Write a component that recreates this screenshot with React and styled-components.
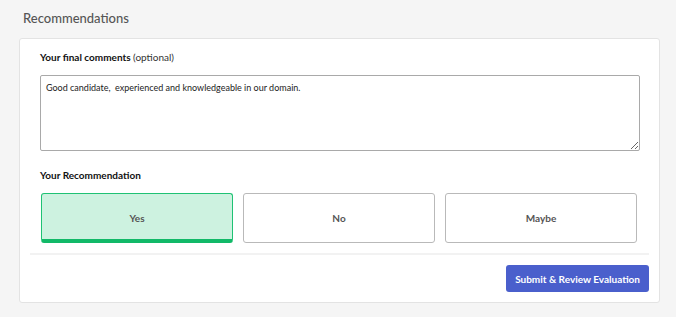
import styled, { createGlobalStyle } from "styled-components";

const GlobalStyle = createGlobalStyle`
  body {
    margin: 0;
    background: #f5f5f5;
    font-family: Lato, "Open Sans", sans-serif;
  }
`;

const Page = styled.div`
  padding: 8px 16px 14px 19px;
  width: 641px;
`;

const Heading = styled.h2`
  margin: 0 0 10px 4px;
  font-size: 13px;
  font-weight: 500;
  line-height: 20px;
  color: #555;
`;

const Card = styled.div`
  background: #fff;
  border: 1px solid #e3e3e3;
  border-radius: 3px;
  padding: 10px;
`;

const Section = styled.div`
  padding: 1px 10px 10px;
  border-bottom: 2px solid #f2f2f2;
`;

const Label = styled.div`
  font-size: 10px;
  line-height: 14px;
  font-weight: 700;
  color: #111;
  margin: 0 0 11px;
  & span {
    font-weight: 400;
    color: #333;
  }
`;

const Comments = styled.textarea`
  display: block;
  box-sizing: border-box;
  width: 600px;
  height: 76px;
  margin: 0 0 17px;
  padding: 5px;
  border: 1px solid #a9a9a9;
  border-radius: 2px;
  font-family: Lato, "Open Sans", sans-serif;
  font-size: 9px;
  line-height: 13px;
  color: #222;
  resize: vertical;
`;

const Choices = styled.div`
  display: grid;
  grid-template-columns: repeat(3, 1fr);
  gap: 10px;
  padding: 0 2px 0 1px;
`;

const Choice = styled.button`
  box-sizing: border-box;
  height: 50px;
  border-radius: 3px;
  border: 1px solid ${(p) => (p.$active ? "#1fc274" : "#b9b9b9")};
  border-bottom: ${(p) => (p.$active ? "4px solid #12b968" : "1px solid #b9b9b9")};
  background: ${(p) => (p.$active ? "#cdf2e0" : "#fff")};
  font-family: Lato, "Open Sans", sans-serif;
  font-size: 10px;
  font-weight: 700;
  color: #555;
  padding: ${(p) => (p.$active ? "3px 0 0" : "0")};
  cursor: pointer;
`;

const Footer = styled.div`
  display: flex;
  justify-content: flex-end;
  padding-top: 10px;
`;

const Submit = styled.button`
  height: 27px;
  padding: 0 9px;
  border: none;
  border-radius: 3px;
  background: #4a5fcc;
  color: #fff;
  font-family: Lato, "Open Sans", sans-serif;
  font-size: 10px;
  font-weight: 700;
  cursor: pointer;
`;

const options = ["Yes", "No", "Maybe"];

const App = () => {
  return (
    <Page>
      <GlobalStyle />
      <Heading>Recommendations</Heading>
      <Card>
        <Section>
          <Label>
            Your final comments <span>(optional)</span>
          </Label>
          <Comments defaultValue="Good candidate,  experienced and knowledgeable in our domain." />
          <Label>Your Recommendation</Label>
          <Choices>
            {options.map((o) => (
              <Choice key={o} $active={o === "Yes"}>
                {o}
              </Choice>
            ))}
          </Choices>
        </Section>
        <Footer>
          <Submit>Submit &amp; Review Evaluation</Submit>
        </Footer>
      </Card>
    </Page>
  );
};

export default App;
